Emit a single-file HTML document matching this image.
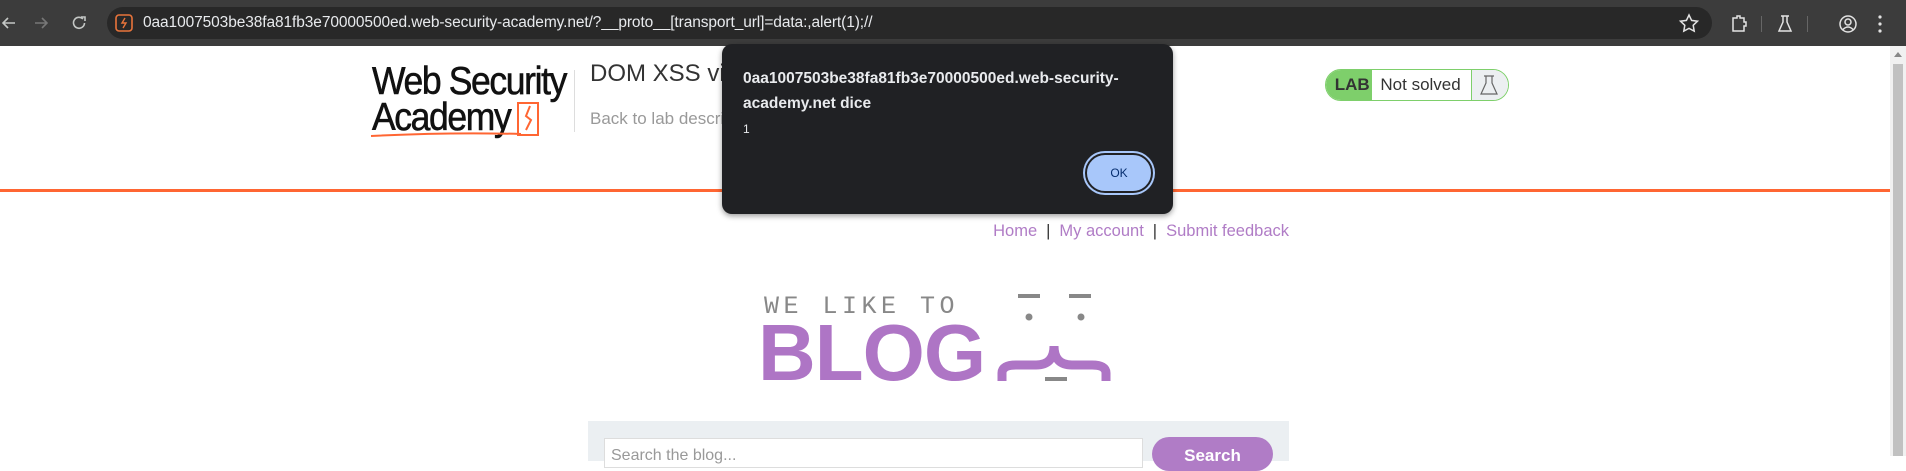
<!DOCTYPE html>
<html><head><meta charset="utf-8"><style>
*{margin:0;padding:0;box-sizing:border-box}
body{width:1906px;height:456px;overflow:hidden;background:#fff;font-family:"Liberation Sans",sans-serif;position:relative}
.abs{position:absolute}
#bar{left:0;top:0;width:1906px;height:46px;background:#3c3c3c}
#omni{left:107px;top:7px;width:1605px;height:32px;background:#282828;border-radius:16px}
#url{left:143px;top:14px;color:#e8eaed;font-size:15.5px;letter-spacing:-0.1px;white-space:nowrap}
#scroll{left:1890px;top:46px;width:16px;height:410px;background:#f1f1f1}
#thumb{left:1893px;top:64px;width:10px;height:392px;background:#c1c1c1}
#title{left:590px;top:60px;font-size:24px;color:#333}
#back{left:590px;top:109px;font-size:17px;color:#999}
#div{left:574px;top:70px;width:1px;height:62px;background:#ddd}
#orange{left:0;top:189px;width:1890px;height:3px;background:#ff6633}
#lab{left:1325px;top:69px;width:184px;height:32px;border:1px solid #7ecf6b;border-radius:16px;overflow:hidden;display:flex;background:#fff}
#lab .l{background:#7ecf6b;width:47px;font-weight:bold;font-size:17px;color:#333;display:flex;align-items:center;justify-content:center;padding-left:6px}
#lab .n{width:100px;font-size:17px;color:#333;display:flex;align-items:center;padding-left:8px}
#lab .f{flex:1;background:#eceff1;border-left:1px solid #7ecf6b}
#dlg{left:722px;top:44px;width:451px;height:170px;background:#202124;border-radius:10px;box-shadow:0 2px 6px rgba(0,0,0,.4)}
#dlg .t{position:absolute;left:21px;top:22px;color:#e8eaed;font-weight:bold;font-size:15.5px;line-height:25px;width:410px}
#dlg .m{position:absolute;left:21px;top:78px;color:#e8eaed;font-size:12px}
#ok{left:363px;top:109px;width:68px;height:40px;border-radius:20px;background:#a8c7fa;border:2px solid #202124;box-shadow:0 0 0 2px #a8c7fa;color:#062e6f;font-size:12px;display:flex;align-items:center;justify-content:center}
#nav{left:900px;top:222px;width:389px;text-align:right;font-size:16.5px;color:#b07cc6;white-space:nowrap}
#nav span{color:#333;margin:0 9px}
#search{left:588px;top:421px;width:701px;height:40px;background:#ebeff2}
#inp{left:604px;top:438px;width:539px;height:30px;background:#fff;border:1px solid #ddd;font-size:16px;color:#999;padding:8px 6px}
#btn{left:1152px;top:437px;width:121px;height:34px;border-radius:17px;background:#b07cc6;color:#fff;font-weight:bold;font-size:17px;text-align:center;padding-top:9px}
</style></head><body>
<div id="bar" class="abs"></div>
<div id="omni" class="abs"></div>
<svg class="abs" style="left:0;top:10px" width="110" height="26" viewBox="0 0 110 26">
<path d="M3 13h12M8 8l-5 5 5 5" stroke="#c4c7c5" stroke-width="1.6" fill="none"/>
<path d="M35 13h12M42 8l5 5-5 5" stroke="#777" stroke-width="1.6" fill="none"/>
<path d="M83 9a5.5 5.5 0 1 0 1.5 4" stroke="#c4c7c5" stroke-width="1.6" fill="none"/><path d="M81 7h4v4" stroke="#c4c7c5" stroke-width="1.6" fill="none"/>
</svg>
<svg class="abs" style="left:115px;top:14px" width="18" height="18"><rect x="1" y="1" width="16" height="16" rx="3" fill="none" stroke="#e8743b" stroke-width="1.6"/><path d="M10 4l-3 5h4l-3 5" stroke="#e8743b" stroke-width="1.4" fill="none"/></svg>
<div id="url" class="abs">0aa1007503be38fa81fb3e70000500ed.web-security-academy.net/?__proto__[transport_url]=data:,alert(1);//</div>
<svg class="abs" style="left:1678px;top:12px" width="228" height="24">
<path d="M11 3l2.6 5.4 5.9.8-4.3 4.1 1 5.8-5.2-2.8-5.2 2.8 1-5.8L2.5 9.2l5.9-.8z" fill="none" stroke="#e3e3e3" stroke-width="1.5"/>
<path d="M55 6h4v-2h3v2h4v4h2v4h-2v5h-11z" fill="none" stroke="#e3e3e3" stroke-width="1.5"/>
<rect x="83" y="4" width="1" height="16" fill="#666"/>
<path d="M105 4v6l-4 9h12l-4-9V4M103 4h8" fill="none" stroke="#e3e3e3" stroke-width="1.5"/>
<rect x="129" y="4" width="1" height="16" fill="#666"/>
<circle cx="170" cy="12" r="8" fill="none" stroke="#e3e3e3" stroke-width="1.5"/><circle cx="170" cy="10" r="3" fill="none" stroke="#e3e3e3" stroke-width="1.5"/><path d="M165 17.5q5-5 10 0" fill="none" stroke="#e3e3e3" stroke-width="1.5"/>
<circle cx="202" cy="5" r="1.6" fill="#e3e3e3"/><circle cx="202" cy="12" r="1.6" fill="#e3e3e3"/><circle cx="202" cy="19" r="1.6" fill="#e3e3e3"/>
</svg>
<div id="scroll" class="abs"></div><div id="thumb" class="abs"></div>
<svg class="abs" style="left:1893px;top:50px" width="10" height="8"><path d="M1 7l4-5 4 5z" fill="#888"/></svg>
<div class="abs" style="left:372px;top:64px;font-size:39px;letter-spacing:-1.5px;color:#111;line-height:36px;transform:scaleX(0.91);transform-origin:0 0;white-space:nowrap;-webkit-text-stroke:0.6px #111">Web Security<br>Academy</div>
<svg class="abs" style="left:370px;top:100px" width="200" height="42"><rect x="148" y="3" width="20" height="32" fill="none" stroke="#ff6633" stroke-width="2"/><path d="M160 6l-4 10 5 4-5 10" stroke="#ff6633" stroke-width="2" fill="none"/><path d="M1 36q80-4 150-2" stroke="#ff6633" stroke-width="2" fill="none"/></svg>
<div id="div" class="abs"></div>
<div id="title" class="abs">DOM XSS vi</div>
<div id="back" class="abs">Back to lab descrip</div>
<div id="lab" class="abs"><div class="l">LAB</div><div class="n">Not solved</div><div class="f"><svg width="36" height="30"><path d="M14 6v7l-5 11h16l-5-11V6M12 6h10" fill="none" stroke="#666" stroke-width="1.2"/></svg></div></div>
<div id="orange" class="abs"></div>
<div id="nav" class="abs">Home<span>|</span>My account<span>|</span>Submit feedback</div>
<div class="abs" style="left:764px;top:292px;font-family:'Liberation Mono',monospace;font-size:25px;letter-spacing:4.5px;color:#888">WE LIKE TO</div>
<div class="abs" style="left:758px;top:313px;font-weight:bold;font-size:80px;letter-spacing:-1px;color:#ae75c5;line-height:80px">BLOG</div>
<svg class="abs" style="left:990px;top:280px" width="135" height="110">
<rect x="28" y="14" width="22" height="4" fill="#888"/><rect x="79" y="14" width="22" height="4" fill="#888"/>
<circle cx="39" cy="37" r="3.5" fill="#888"/><circle cx="91" cy="37" r="3.5" fill="#888"/>
<path d="M12 101v-8q0-8 14-8h20q18 0 18-19q0 19 18 19h20q14 0 14 8v8" fill="none" stroke="#ae75c5" stroke-width="9"/>
<rect x="55" y="97" width="22" height="4" fill="#888"/>
</svg>
<div id="search" class="abs"></div>
<div id="inp" class="abs">Search the blog...</div>
<div id="btn" class="abs">Search</div>
<div id="dlg" class="abs"><div class="t">0aa1007503be38fa81fb3e70000500ed.web-security-academy.net dice</div><div class="m">1</div><div id="ok" class="abs">OK</div></div>
</body></html>
